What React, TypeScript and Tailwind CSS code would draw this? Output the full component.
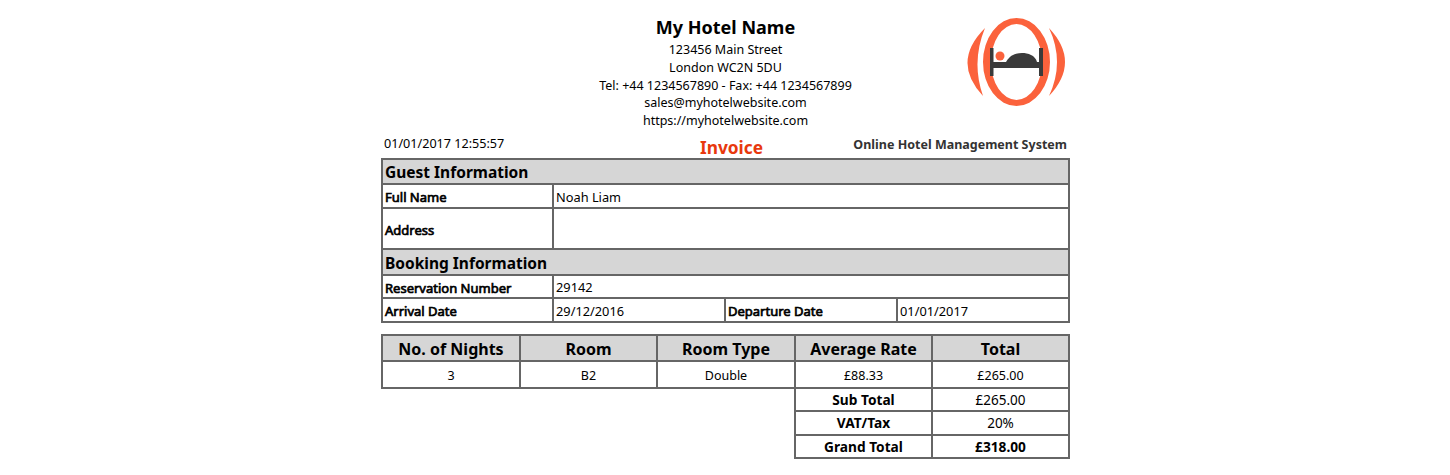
function Logo() {
  return (
    <svg width="100" height="92" viewBox="0 0 100 92" className="block">
      <path
        fillRule="evenodd"
        d="M17 46 A33.5 44 0 1 1 84 46 A33.5 44 0 1 1 17 46 Z M25 46 A25.5 38 0 1 0 76 46 A25.5 38 0 1 0 25 46 Z"
        fill="#fb623c"
      />
      <path d="M19 12 Q-15 46 17 80 Q5 46 19 12 Z" fill="#fb623c" />
      <path d="M83 12 Q115 46 83 80 Q99 46 83 12 Z" fill="#fb623c" />
      <rect x="24" y="32" width="3.5" height="28" fill="#3a3a3a" />
      <rect x="73" y="32" width="4" height="28" fill="#3a3a3a" />
      <rect x="24" y="46" width="53" height="6" fill="#3a3a3a" />
      <circle cx="34" cy="40" r="4.5" fill="#fb623c" />
      <path d="M40 46 C44 39 50 37 56 37 C62 37 69 39 71 46 Z" fill="#3a3a3a" />
    </svg>
  );
}

// the labels in the reference are a regular face thickened, not a true bold
const fauxBold = "font-normal [-webkit-text-stroke:0.7px_black]";
const labelCell = `border-2 border-[#666] px-[2px] pt-[2px] pb-0 text-left text-[13px] leading-[18px] ${fauxBold}`;
const valueCell = "border-2 border-[#666] px-[2px] pt-[1px] pb-0 text-left text-[12.8px] leading-[18px]";
const sectionCell = "border-2 border-[#666] bg-[#d6d6d6] px-[2px] py-0 text-left text-[15.5px] leading-[20px] font-bold";
const headCell = "border-2 border-[#666] bg-[#d6d6d6] px-0 pt-[2px] pb-0 text-center text-[16px] leading-[20px] font-bold";
const bodyCell = "border-2 border-[#666] px-0 pt-[3px] pb-0 text-center text-[12.5px] leading-[18px]";
const totalLabel = "border-2 border-[#666] p-0 text-center text-[13.7px] leading-[18px] font-bold";
const totalValue = "border-2 border-[#666] p-0 text-center text-[13.5px] leading-[18px]";

export default function App() {
  return (
    <div className="h-[475px] w-[1450px] overflow-hidden bg-white font-['Noto_Sans',sans-serif] text-black">
      <div className="ml-[381px] w-[689px]">
        <div className="relative h-[137px] pt-[15px] text-center text-[12.5px] leading-[17.8px]">
          <div className="mb-[2px] text-[18px] leading-[24px] font-bold">My Hotel Name</div>
          <div>123456 Main Street</div>
          <div>London WC2N 5DU</div>
          <div>Tel: +44 1234567890 - Fax: +44 1234567899</div>
          <div>sales@myhotelwebsite.com</div>
          <div>https://myhotelwebsite.com</div>
          <div className="absolute top-[16px] left-[585px]">
            <Logo />
          </div>
        </div>
        <div className="flex h-[21px] items-start justify-between px-[3px]">
          <span className="w-[240px] text-[12.6px] leading-[14px]">01/01/2017 12:55:57</span>
          <span className="translate-x-[6px] text-[17.3px] leading-[21px] font-bold text-[#e8380d]">Invoice</span>
          <span className="w-[240px] text-right text-[12.5px] leading-[16px] font-bold text-[#333]">Online Hotel Management System</span>
        </div>
        <table className="w-[689px] table-fixed border-collapse">
          <colgroup>
            <col className="w-[171px]" />
            <col className="w-[172px]" />
            <col className="w-[172px]" />
            <col className="w-[172px]" />
          </colgroup>
          <tbody>
            <tr className="h-[25px]">
              <td colSpan={4} className={sectionCell}>Guest Information</td>
            </tr>
            <tr className="h-[24px]">
              <td className={labelCell}>Full Name</td>
              <td colSpan={3} className={valueCell}>Noah Liam</td>
            </tr>
            <tr className="h-[41px]">
              <td className={labelCell}>Address</td>
              <td colSpan={3} className={valueCell}></td>
            </tr>
            <tr className="h-[26px]">
              <td colSpan={4} className={`${sectionCell} pt-[1px]`}>Booking Information</td>
            </tr>
            <tr className="h-[23px]">
              <td className={labelCell}>Reservation Number</td>
              <td colSpan={3} className={valueCell}>29142</td>
            </tr>
            <tr className="h-[24px]">
              <td className={labelCell}>Arrival Date</td>
              <td className={valueCell}>29/12/2016</td>
              <td className={labelCell}>Departure Date</td>
              <td className={valueCell}>01/01/2017</td>
            </tr>
          </tbody>
        </table>
        <table className="mt-[11px] w-[689px] table-fixed border-collapse">
          <colgroup>
            <col className="w-[138px]" />
            <col className="w-[137px]" />
            <col className="w-[138px]" />
            <col className="w-[137px]" />
            <col className="w-[137px]" />
          </colgroup>
          <tbody>
            <tr className="h-[26px]">
              <td className={headCell}>No. of Nights</td>
              <td className={headCell}>Room</td>
              <td className={headCell}>Room Type</td>
              <td className={headCell}>Average Rate</td>
              <td className={headCell}>Total</td>
            </tr>
            <tr className="h-[27px]">
              <td className={bodyCell}>3</td>
              <td className={bodyCell}>B2</td>
              <td className={bodyCell}>Double</td>
              <td className={bodyCell}>£88.33</td>
              <td className={bodyCell}>£265.00</td>
            </tr>
            <tr className="h-[23px]">
              <td colSpan={3} className="p-0"></td>
              <td className={totalLabel}>Sub Total</td>
              <td className={totalValue}>£265.00</td>
            </tr>
            <tr className="h-[24px]">
              <td colSpan={3} className="p-0"></td>
              <td className={totalLabel}>VAT/Tax</td>
              <td className={totalValue}>20%</td>
            </tr>
            <tr className="h-[23px]">
              <td colSpan={3} className="p-0"></td>
              <td className={totalLabel}>Grand Total</td>
              <td className={totalLabel}>£318.00</td>
            </tr>
          </tbody>
        </table>
      </div>
    </div>
  );
}
